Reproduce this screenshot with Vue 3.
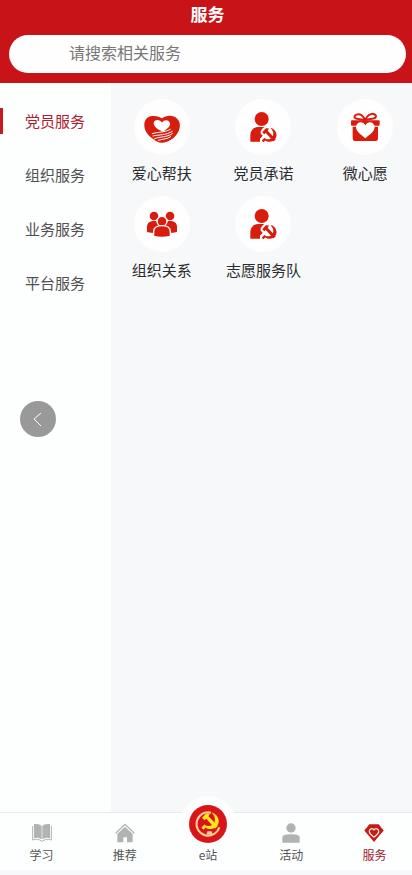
<script setup>
import { ref } from 'vue'

const categories = ['党员服务', '组织服务', '业务服务', '平台服务']
const activeCategory = ref(0)
const keyword = ref('')

const services = [
  { name: '爱心帮扶', icon: 'care' },
  { name: '党员承诺', icon: 'member' },
  { name: '微心愿', icon: 'gift' },
  { name: '组织关系', icon: 'group' },
  { name: '志愿服务队', icon: 'member' }
]

const tabs = [
  { name: '学习', icon: 'book' },
  { name: '推荐', icon: 'home' },
  { name: 'e站', icon: 'station' },
  { name: '活动', icon: 'person' },
  { name: '服务', icon: 'gem' }
]
const activeTab = 4
</script>

<template>
  <div class="page">
    <svg class="defs" aria-hidden="true">
      <symbol id="emblem" viewBox="0 0 48 48">
        <path d="M27 1C42 5 50 19 45 32C39 46 22 49 11 41L6 47L0 42L8 33C17 40 29 38 34 30C39 20 36 10 27 1Z" />
        <path d="M2 15L13 3L23 4L19 11L44 37L37 44L13 18L8 22Z" />
      </symbol>
    </svg>

    <header class="header">
      <h1 class="title">服务</h1>
      <input v-model="keyword" class="search" type="search" placeholder="请搜索相关服务" aria-label="请搜索相关服务" />
    </header>

    <div class="body">
      <nav class="sidebar">
        <button
          v-for="(item, i) in categories"
          :key="item"
          type="button"
          class="category"
          :class="{ active: i === activeCategory }"
          @click="activeCategory = i"
        >{{ item }}</button>
      </nav>

      <main class="services">
        <a v-for="s in services" :key="s.name" href="#" class="service">
          <span class="disc">
            <svg v-if="s.icon === 'care'" viewBox="0 0 168 168" aria-hidden="true">
              <path class="red" d="M84 58C94 50 109 48 121 53C134 59 140 72 137 86C133 107 111 129 86 131C76 132 67 128 59 121C44 111 32 98 31 80C30 63 40 52 55 51C67 50 77 53 84 58Z" />
              <path class="white" d="M84 71C91 61 105 62 108 73C110 84 96 91 87 99C79 95 59 86 59 73C60 60 78 60 84 71Z" />
              <path class="line" d="M55 104C72 98 89 102 109 91M57 111C77 106 93 110 115 97M62 119C80 112 96 116 115 104M73 124C89 119 98 121 110 113" />
            </svg>
            <svg v-else-if="s.icon === 'member'" viewBox="0 0 168 168" aria-hidden="true">
              <circle class="red" cx="80" cy="60" r="21" />
              <path class="red" d="M46 128V111C46 94 56 84 70 84H88C79 91 74 99 78 105L83 110L75 119V128Z" />
              <use class="red" href="#emblem" x="80" y="85" width="46" height="46" />
            </svg>
            <svg v-else-if="s.icon === 'gift'" viewBox="0 0 168 168" aria-hidden="true">
              <path class="bow" d="M84 64C72 59 58 62 53 56C50 47 64 43 73 48C79 52 82 58 84 64C87 57 91 49 100 46C110 42 119 47 116 55C112 62 96 58 84 64Z" />
              <rect class="red" x="42" y="64" width="86" height="16" rx="3" />
              <path class="red" d="M47 83H123V119Q123 126 116 126H54Q47 126 47 119Z" />
              <path class="white" d="M85 79C92 65 112 67 113 84C113 99 94 109 85 118C76 109 57 99 57 84C58 67 78 65 85 79Z" />
            </svg>
            <svg v-else viewBox="0 0 168 168" aria-hidden="true">
              <circle class="red" cx="60" cy="60" r="13" />
              <circle class="red" cx="108" cy="60" r="13" />
              <path class="red" d="M39 108V93C39 81 47 75 60 75C73 75 80 81 80 93V110Q57 113 39 108Z" />
              <path class="red" d="M88 110V93C88 81 95 75 108 75C121 75 129 81 129 93V108Q111 113 88 110Z" />
              <circle class="red edge" cx="84" cy="76" r="15" />
              <path class="red edge" d="M59 121V107C59 94 67 89 84 89C101 89 109 94 109 107V121Q84 128 59 121Z" />
            </svg>
          </span>
          <span>{{ s.name }}</span>
        </a>
      </main>
    </div>

    <nav class="tabbar">
      <a
        v-for="(t, i) in tabs"
        :key="t.name"
        href="#"
        class="tab"
        :class="{ active: i === activeTab, center: t.icon === 'station' }"
      >
        <span class="glyph">
          <svg v-if="t.icon === 'book'" viewBox="0 0 60 60" aria-hidden="true">
            <path d="M6 4C15 1 24 4 29 9V49C22 44 14 43 6 46ZM54 4C45 1 36 4 31 9V49C38 44 46 43 54 46Z" />
            <path class="outline" d="M2 9V51C13 47 22 49 28 54H32C38 49 47 47 58 51V9" />
          </svg>
          <svg v-else-if="t.icon === 'home'" viewBox="0 0 60 60" aria-hidden="true">
            <path class="outline roof" d="M2 31L30 4L58 31" />
            <path d="M30 11L53 33V58H36V43H25V58H7V33Z" />
          </svg>
          <svg v-else-if="t.icon === 'person'" viewBox="0 0 60 60" aria-hidden="true">
            <circle cx="30" cy="15" r="14" />
            <path d="M4 59V44C4 36 14 34 30 34C46 34 56 36 56 44V59Z" />
          </svg>
          <svg v-else-if="t.icon === 'gem'" viewBox="0 0 64 60" aria-hidden="true">
            <path d="M17 2H47L63 22L32 59L1 22Z" />
            <path class="heart" d="M32 20C37 13 47 16 47 25C47 33 38 38 32 43C26 38 17 33 17 25C17 16 27 13 32 20Z" />
          </svg>
          <svg v-else viewBox="0 0 114 114" aria-hidden="true">
            <circle class="badge" cx="57" cy="57" r="57" />
            <path class="ring" d="M66 23A35 35 0 1 0 91 67" />
            <path class="plinth" d="M52 89L55 79L68 79L71 89Z" />
            <use class="gold" href="#emblem" x="37" y="21" width="54" height="54" />
          </svg>
        </span>
        <span>{{ t.name }}</span>
      </a>
    </nav>

    <button type="button" class="back" aria-label="返回">
      <svg viewBox="0 0 36 36" aria-hidden="true"><path d="M21 12L14 18L21 25" /></svg>
    </button>
  </div>
</template>

<style>
html {
  height: 100%;
  overflow: hidden;
}

body,
#app {
  height: 100%;
}
</style>

<style scoped>
.page {
  display: flex;
  flex-direction: column;
  box-sizing: border-box;
  width: calc(100% + 4px);
  height: 100%;
  padding-bottom: 5px;
  background: #f6f8fa;
  color: #2c2c2e;
  font-family: "Noto Sans CJK SC", sans-serif;
}

.defs {
  position: absolute;
  width: 0;
  height: 0;
}

.header {
  display: flex;
  flex-direction: column;
  gap: 7px;
  padding: 0 10px 10px 9px;
  background: #c81419;
}

.title {
  margin: 0;
  color: #fff;
  font-size: 17px;
  font-weight: 700;
  line-height: 28px;
  text-align: center;
}

.search {
  box-sizing: border-box;
  width: 100%;
  height: 38px;
  padding: 0 60px 4px;
  border: 0;
  border-radius: 19px;
  outline: 0;
  background: #fffefe;
  color: #333;
  font: inherit;
  font-size: 16px;
  appearance: none;
}

.search::placeholder {
  color: #777;
  opacity: 1;
}

.body {
  display: flex;
  flex: 1;
  min-height: 0;
}

.sidebar {
  display: flex;
  flex: none;
  flex-direction: column;
  width: 111px;
  padding-top: 11px;
  background: #fdfefe;
}

.category {
  display: flex;
  align-items: center;
  height: 54px;
  padding: 0 0 1px 25px;
  border: 0;
  background: linear-gradient(#c91920, #c91920) no-repeat left center / 0 26px;
  color: #505052;
  font: inherit;
  font-size: 15px;
}

.category.active {
  background-size: 3px 26px;
  color: #ae1c30;
}

.services {
  display: grid;
  flex: 1;
  grid-template-columns: repeat(3, 1fr);
  align-content: start;
  row-gap: 11px;
  padding-top: 16px;
}

.service {
  display: flex;
  flex-direction: column;
  align-items: center;
  gap: 6px;
  color: inherit;
  font-size: 15px;
  line-height: 24px;
  text-decoration: none;
}

.disc {
  display: block;
  width: 56px;
  height: 56px;
  border-radius: 50%;
  background: #fefefe;
}

.disc svg,
.glyph svg {
  display: block;
  width: 100%;
  height: 100%;
}

.red {
  fill: #d81c0e;
}

.edge {
  stroke: #fff;
  stroke-width: 4;
}

.white {
  fill: #fff;
}

.line {
  fill: none;
  stroke: #fff;
  stroke-width: 3;
  stroke-linecap: round;
}

.bow {
  fill: none;
  stroke: #d81c0e;
  stroke-width: 6;
}

.tabbar {
  display: grid;
  grid-template-rows: 100%;
  grid-template-columns: repeat(5, 1fr);
  height: 57px;
  border-top: 1px solid #e6e8ea;
  background: #fdfefe;
}

.tab {
  display: flex;
  flex-direction: column;
  align-items: center;
  justify-content: flex-end;
  gap: 2px;
  box-sizing: border-box;
  min-height: 0;
  padding-bottom: 5px;
  color: #555;
  font-size: 12px;
  line-height: 20px;
  text-decoration: none;
}

.tab.active {
  color: #a5152c;
}

.glyph {
  flex: none;
  width: 20px;
  height: 20px;
  fill: #b2b2b2;
}

.active .glyph {
  fill: #c91b16;
}

.center .glyph {
  width: 38px;
  height: 38px;
  padding: 9px;
  margin-bottom: -9px;
  border-radius: 50%;
  background: #fdfefe;
}

.outline,
.heart {
  fill: none;
  stroke: #b2b2b2;
  stroke-width: 3;
}

.roof {
  stroke-width: 4;
}

.heart {
  stroke: #ffe9d8;
  stroke-width: 4;
}

.badge {
  fill: #d9151a;
}

.ring {
  fill: none;
  stroke: #f9cf96;
  stroke-width: 6;
}

.plinth {
  fill: #f9cf96;
}

.gold {
  fill: #ffe51f;
}

.back {
  position: absolute;
  top: 401px;
  left: 20px;
  width: 36px;
  height: 36px;
  padding: 0;
  border: 0;
  border-radius: 50%;
  background: #999;
}

.back svg {
  display: block;
  fill: none;
  stroke: #fff;
  stroke-width: 1;
}
</style>
